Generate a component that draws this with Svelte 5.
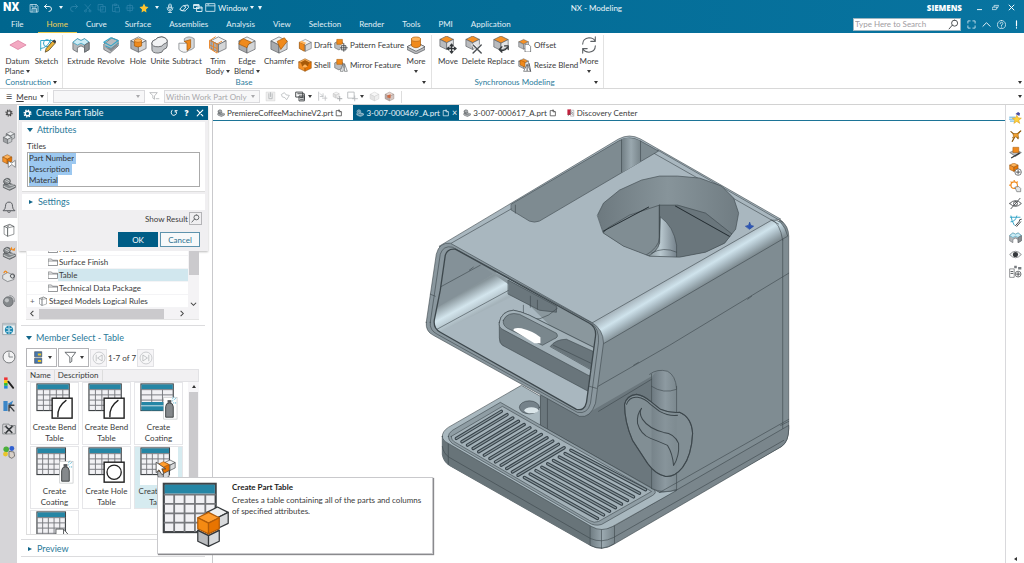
<script>
  import { onMount } from 'svelte';

  const G = ['#f2f3f4', '#a9abae', '#d3d5d7'];
  const O = ['#ffb45c', '#e87400', '#f59127'];

  // Isometric block: x/y is the top-left of its box, s its side
  function cube(x, y, s, top = G[0], left = G[1], right = G[2], line = '#55585c') {
    const m = x + s / 2, r = x + s, q = y + s / 4, h = y + s / 2, b = y + s * 0.76, e = y + s;
    return `<g stroke="${line}" stroke-width=".7" stroke-linejoin="round"><path d="M${m} ${y}L${r} ${q}L${m} ${h}L${x} ${q}Z" fill="${top}"/><path d="M${x} ${q}L${m} ${h}V${e}L${x} ${b}Z" fill="${left}"/><path d="M${r} ${q}L${m} ${h}V${e}L${r} ${b}Z" fill="${right}"/></g>`;
  }
  const oTop = (x, y, s) => cube(x, y, s, '#f59127', '#b9bbbe', '#e2e3e5');
  const oAll = (x, y, s) => cube(x, y, s, O[0], O[2], O[1], '#8a4a08');
  const line = (d, c = '#4d5155', w = 1.3) => `<path d="${d}" fill="none" stroke="${c}" stroke-width="${w}" stroke-linecap="round" stroke-linejoin="round"/>`;
  const fill = (d, c, s = 'none') => `<path d="${d}" fill="${c}" stroke="${s}" stroke-width=".8" stroke-linejoin="round"/>`;
  const cup = (c = '#85898c', l = '#45494c', w = '#e4e6e7') => `<path d="M2 11l6-3 11 4v3l-8 4-9-4z" fill="${c}" stroke="${l}"/><path d="M2 13l8 4 9-4M6 9l6 3 5-1" fill="none" stroke="${w}"/><path d="M3 4q4-4 8-1 2 3 0 6-3 3-7 1-3-3-1-6z" fill="${c}" stroke="${l}"/><path d="M4 5l6 3M6 3l5 3" stroke="${w}"/>`;

  const icons = {
    save: line('M3 3h12l3 3v12H3zM6 3v5h8V3M6 18v-7h9v7M8 14h5', '#cfe6f0', 1.5),
    undo: line('M7 3L3 7l4 4M3 7h9q5 0 5 5t-5 5', '#fff', 1.8),
    redo: line('M13 3l4 4-4 4M17 7H8q-5 0-5 5t5 5', '#2a82a8', 1.8),
    cut: line('M4 3l10 11M15 3L6 14M3 16a2 2 0 104 0 2 2 0 10-4 0M12 16a2 2 0 104 0 2 2 0 10-4 0', '#2a82a8', 1.6),
    copy: line('M3 3h9v11H3zM8 7h9v11H8z', '#2a82a8', 1.6),
    paste: line('M3 4h12v5M3 4v13h5M9 9h8v9H9zM7 2h4v3H7z', '#2a82a8', 1.6),
    target: line('M10 2v16M2 10h16M5 5h10v10H5z', '#2a82a8', 1.6),
    star: fill('M10 1l3 6 6 1-5 5 1 6-5-3-5 3 1-6-5-5 6-1z', '#ffc52e'),
    mic: line('M7 5q0-3 3-3t3 3v5q0 3-3 3t-3-3zM4 9q0 7 6 7t6-7M10 16v3M7 19h6M8 6h4M8 9h4', '#e6f3f8', 1.5),
    eraser: line('M2 12l6-7 6 3-6 7zM11 5l7-1 1 5-6 6M4 15l8 1', '#e6f3f8', 1.8),
    windows: line('M2 3h10v8H2zM2 5h10M8 8h10v9H8zM8 10h10', '#e6f3f8', 1.8),
    win: line('M2 3h16v14H2zM2 7h16M5 5h2', '#cfe6f0', 1.6),
    full: line('M2 7V2h5M13 2h5v5M18 13v5h-5M7 18H2v-5', '#e6f3f8', 1.7),
    up: line('M2 14l8-8 8 8', '#e6f3f8', 2.2),
    help: line('M10 1a9 9 0 100 18 9 9 0 100-18M7 8q0-3 3-3t3 3q0 2-3 3v2M10 15.500v.5', '#e6f3f8', 1.7),
    bang: line('M10 2v11M10 17v1', '#fff', 2.6),
    min: line('M4 16h12', '#fff', 2.6),
    restore: line('M6 8V4h13l-3 7h-3M3 9h12l-3 7H1z', '#e6f3f8', 2),
    close: line('M3 3l14 14M17 3L3 17', '#fff', 2.8),
    search: line('M12 2a5 5 0 100 11 5 5 0 100-11M8 11l-6 7', '#45494c', 1.7),

    datum: fill('M10 5l9 5-9 5-9-5z', '#f3a9c2', '#d87b9c'),
    sketch: line('M3 16V5h13M3 14q8-1 11-10M6 8a4 4 0 108 0 4 4 0 10-8 0', '#35a6c8', 1.1) + fill('M8 18l1-4 8-9 3 2-8 9z', '#e8b23a', '#4d3f20') + fill('M16 6l2-2 2.500 2-2 2z', '#3b3f44'),
    extrude: fill('M1 7l5-4 4 2 4-2 5 4v8l-5 3v-5l-4-2-4 2v5l-5-3z', '#b4b7ba', '#5c6064') + fill('M1 7l5-4 4 2 4-2 5 4-5 3-4-2-4 2z', '#cdebf4', '#35a6c8') + fill('M14 10l5-3v8l-5 3z', '#8d9194', '#5c6064'),
    revolve: fill('M2 9l9-7 7 3v6l-9 8-7-4z', '#b9bcbf', '#5c6064') + line('M2 7l8-5 8 3-8 6zM4 11l6 3 8-6', '#35a6c8', 1.2) + fill('M3 12l7 2 7-6v3l-7 6z', '#878b8f'),
    hole: cube(2, 1, 17) + fill('M6 5q4-3 8 0v6q-4 2.500-8 0z', '#f08a1c', '#a85a08') + '<ellipse cx="10" cy="5" rx="4" ry="2" fill="#ffb45c" stroke="#a85a08" stroke-width=".6"/>',
    unite: fill('M1 8q0-3 4-4 2-3 7-3 6 1 6 5v5q0 3-4 4-1 4-6 4-7 0-7-4z', '#c2c5c8', '#45494c') + fill('M1 8q0-3 4-4 2-3 7-3 6 1 6 5 0 2-4 3-1 3-6 3-7 0-7-4z', '#f2f3f4', '#45494c'),
    subtract: fill('M1 8v7q5 5 10 2v-9z', '#f4f5f6', '#777b7f') + fill('M7 3q5-4 11 0v10q-3 3-7 3V8L7 6z', '#d5d7d9', '#777b7f') + fill('M7 6l7-2v9l-4 3V8z', '#f08a1c', '#a85a08'),
    trim: cube(2, 1, 17) + line('M1 5l8 4v10L1 14zM9 9l5-3M1 5l6-4M5 7v9M1 10l8 4', '#e8862a', 1.1),
    edge: cube(1, 1, 18) + fill('M6 3l9 4q-4 1-5 6l-9-4q1-5 5-6z', '#f08a1c', '#a85a08'),
    chamfer: cube(1, 1, 18) + fill('M8 6l8-4 3 4-7 9z', '#f08a1c', '#a85a08'),
    draft: cube(2, 2, 17) + fill('M2 6l7 3v10l-7-4z', '#f08a1c', '#a85a08') + fill('M2 6l3-2 7 3-3 2z', '#ffb45c'),
    shell: oAll(1, 1, 18) + fill('M4 6l6-3 6 3-2 6-4 2-4-2z', '#a85a08') + fill('M6 12l4-3 4 3-4 2z', '#ffb45c'),
    pattern: fill('M1 7l6-3 6 3v7l-6 3-6-3z', '#b9bbbe', '#55585c') + fill('M4 2h8v7H4z', '#f08a1c', '#a85a08') + '<circle cx="14" cy="14" r="5.500" fill="#fff"/>' + line('M14 8v11M9 14h10M11 11h6v6h-6z', '#45494c', 1.3),
    mirror: fill('M1 7l6-3 6 3v7l-6 3-6-3z', '#b9bbbe', '#55585c') + fill('M4 2h8v7H4z', '#f08a1c', '#a85a08') + fill('M13 8l-4 11h4zM15 8l4 11h-4z', '#fff', '#45494c'),
    more: fill('M0 12l10-5 10 5v3l-10 5-10-5z', '#b9bbbe', '#55585c') + fill('M0 12l10-5 10 5-10 5z', '#eceeef', '#55585c') + fill('M5 3q5-3 10 0v8q-5 4-10 0z', '#f08a1c', '#a85a08') + '<ellipse cx="10" cy="3.500" rx="5" ry="2.500" fill="#ffb45c" stroke="#a85a08" stroke-width=".6"/>',
    move: oTop(1, 0, 15) + line('M14 9v10M9 14h10M12.500 11L14 9l1.500 2M12.500 17l1.500 2 1.500-2M11 12.500L9 14l2 1.500M17 12.500l2 1.500-2 1.500', '#34383b', 1.4),
    delete: oTop(1, 0, 15) + line('M9 10l9 9M18 10l-9 9', '#fff', 3.400) + line('M9 10l9 9M18 10l-9 9', '#4d5155', 1.6),
    replace: oTop(2, 0, 16) + line('M9 15q3 3 8-2M14 11h4v4M11 12l-3 3 3 3', '#34383b', 1.4),
    offset: oTop(1, 2, 14) + fill('M10 9h5l3 3v8h-8z', '#fff', '#34383b'),
    resize: oTop(1, 1, 14) + fill('M3 3l7 3v7l-7-3z', '#f08a1c', '#a85a08') + fill('M13 9l-5 10h10z', '#fff', '#34383b') + line('M13 10v8M16 8l2 11'),
    cycle: line('M3 9q0-6 7-7 5 0 7 4M17 1v5h-5M17 11q0 6-7 7-5 0-7-4M3 19v-5h5', '#5c6064', 1.200),

    funnel: line('M2 3h13l-5 6v6l-3-2V9zM13 14h5', '#a7aaad', 1.3),
    pin: fill('M2 2h16v16H2z', '#eee', '#ccc') + line('M7 5v9h6V5M10 3v7', '#b3b6b8', 1.6),
    brush: line('M3 6l5-3 3 4 6 1-5 8-3-4-4-1z', '#bcbfc1', 1.6),
    filterBox: line('M2 2h12v9H2zM5 5h12v10M8 9h9v9H8zM10 12h5M10 15h5', '#3f4346', 1.7),
    snap: line('M3 2v15M6 5l5 5M11 5v5H6M10 13h8M15 9v8', '#bfc1c3', 1.5),
    gcube: cube(2, 2, 11, '#f4f4f4', '#e0e0e0', '#eee', '#bbb') + line('M14 10v8M10 14h8', '#a7aaad', 1.8),
    gbox: line('M2 2h11v11H2zM14 9v9M10 14h9', '#b3b6b8', 1.5),
    fcube: cube(2, 2, 16, '#f7f7f7', '#e4e4e4', '#efefef', '#c5c5c5'),
    rcube: cube(2, 2, 16, '#e6d6d0', '#b9a8a4', '#d5c8c4', '#8c7d7a') + fill('M6 8l6-2v7l-6-1z', '#cf6a42'),

    gear: '<circle cx="10" cy="10" r="5" fill="none" stroke="currentColor" stroke-width="3"/><circle cx="10" cy="10" r="7.500" fill="none" stroke="currentColor" stroke-width="3" stroke-dasharray="3 2.890"/>',
    assembly: cube(6, 1, 12, '#eceeef', '#9ea1a4', '#c9ccce', '#4d5155') + cube(2, 6, 12, '#eceeef', '#9ea1a4', '#c9ccce', '#4d5155'),
    constraint: oAll(1, 1, 13) + fill('M9 10l5 3 5-4v10l-5-4-5 4z', '#fff', '#45494c'),
    cup: cup(),
    cupW: cup('#3f7f9c', '#dcebf2', '#e9f4f8'),
    bell: line('M2 15q3-2 3-6 0-6 5-6t5 6q0 4 3 6zM8 17q2 2 4 0', '#4d5155', 1.3),
    part: fill('M3 5l5 2v12l-5-3zM8 7l9-2v11l-9 3z', '#fff', '#45494c') + line('M3 5l8-3 6 3M10 4l-3 2', '#45494c', 1.1),
    cupO: cup() + fill('M11 5l3-4 1 4 4-3-1 5z', '#f08a1c'),
    sheet: fill('M1 9l7-4 9 4v6l-9 3-7-4z', '#e4e6e7', '#55585c') + line('M3 5q2-4 4 0', '#f08a1c', 2) + line('M12 10a3 3 0 106 0 3 3 0 10-6 0'),
    sphere: '<circle cx="9" cy="11" r="7" fill="#85898c" stroke="#5c6064"/><circle cx="7" cy="9" r="3" fill="#bfc2c4"/>' + line('M11 2q8 1 7 9M12 4q4 1 4 5', '#8b8f92', 1.2),
    web: fill('M1 2h18v16H1z', '#eaf2f5', '#7b7f83') + fill('M1 2h18v3H1z', '#b9c3c9') + '<circle cx="10" cy="11.500" r="6" fill="#1e86ae"/>' + line('M6 9q4 3 8 0M6 14q4-3 8 0M10 6v11', '#d0ebf5', 1.2),
    clock: '<circle cx="10" cy="10" r="8.500" fill="#f3f3f4" stroke="#6d7174" stroke-width="1.3"/>' + line('M10 4v6h5', '#6d7174', 1.2),
    rainbow: fill('M3 2h5v4H3z', '#e33') + fill('M3 6h5v4H3z', '#fc0') + fill('M3 10h5v4H3z', '#3b3') + fill('M3 14h5v4H3z', '#28d') + line('M9 8l7 9', '#222', 2.600),
    tools: fill('M2 3h6v14H2zM8 7l8-5-3 8z', '#3a86c8') + line('M10 9l7 8M10 17V9h7', '#3f4346', 2),
    cross: line('M1 5v12h18V5h-8l-1-2H2z', '#6d7174', 1) + line('M6 7l8 8M14 7l-8 8', '#34383b', 2.4) + line('M4 7l2-2M14 5l2 2M4 15l2 2', '#34383b', 1.4),
    balls: '<circle cx="6" cy="6" r="4" fill="#4caf3a"/><circle cx="14" cy="5" r="3.500" fill="#2f5fd0"/><circle cx="5" cy="13" r="3.500" fill="#e9c52a"/>' + fill('M10 9l7 1 1 6-4 3-4-2z', '#d8d0c8', '#333'),

    rStar: line('M1 8h8M0 11h8M2 14h6', '#4aa3d8', 1.4) + fill('M12 5l2 4 5 .5-4 3 1.500 5-4.500-3-4.500 3 1.500-5-4-3 5-.5z', '#ffd23c', '#d99b12') + fill('M10 3l4-3 3 2-1 4z', '#4b4fa0'),
    rAxis: line('M3 4l6 5M18 3l-7 6M9 12l-4 7M12 12l2 3', '#8a5508', 1.8) + fill('M6 7l7 0 4-3-3 5 1 5-5-2-5 2 2-3z', '#f0a030', '#8a5508'),
    rTool: fill('M1 10l9-4 9 4-9 6z', '#b9bbbe', '#45494c') + fill('M6 2h9v8H6z', '#f08a1c', '#a85a08') + line('M4 18l12-7', '#34383b', 2),
    rAdd: oAll(1, 0, 13) + '<circle cx="14" cy="14" r="5" fill="#fff" stroke="#34383b"/>' + line('M14 11v6M11 14h6', '#34383b', 1.2),
    rGear: line('M8 3a5 5 0 100 10 5 5 0 100-10M8 0v2M1 8h1M3 3l1 1M13 3l-1 1', '#f08a1c', 1.8) + fill('M9 11l6-1 3 3v5h-6z', '#e4e6e7', '#45494c'),
    rHide: line('M1 10q9-9 18 0-9 9-18 0M10 7a3 3 0 100 6 3 3 0 100-6M3 18L17 2', '#3f4346', 1.3),
    rPen: line('M2 5h15M3 3q1 8 5 14M3 12q7 0 9-9', '#35a6c8', 1.5) + line('M10 18l6-7q-1-3 3-3M12 19l6-7', '#45494c', 1.500),
    rEye: fill('M1 10q9-10 18 0-9 10-18 0', '#f4f5f5', '#34383b') + '<circle cx="10" cy="10" r="4" fill="#34383b"/>',
    rTree: fill('M1 6h7v13H1z', '#fff', '#34383b') + fill('M8 1h4v4H8zM14 3h5v4h-5z', '#777b7f') + '<circle cx="14" cy="14" r="4.500" fill="#fff" stroke="#34383b"/>' + line('M14 11v6M11 14h6M3 10h3M3 13h3', '#34383b', 1.2),
    folder: line('M1 4h6l2 2.500h10V17H1zM1 8h18', '#5c6064', 1.3),
    swap: line('M5 3Q1 8 4 13t9 2q5-3 3-8l-3-3M13 8V4h5', '#fff', 2.2),
    page: line('M4 4h8l4 4v9H4zM10 2v5h6', 'currentColor', 1.8),
    redpage: fill('M1 1h9v14H1z', '#c2203c') + fill('M9 3h8v15H9z', '#f4f4f5', '#55585c') + line('M11 7l4 3M11 11l4 3M3 17l6-8', '#55585c', 1.4),
    stack: fill('M4 1h11v8H4zM4 11h11v8H4z', '#4677b0', '#34383b') + fill('M9 4h5v3H9zM9 14h5v3H9z', '#e9c52a'),
    funnelD: line('M2 2h16l-6 8v6l-3 2V10z', '#5c6064', 1.4),
    first: '<circle cx="10" cy="10" r="8.500" fill="#f8f8f9" stroke="#b9bbbe"/>' + line('M6 6v8M14 6l-6 4 6 4z', '#b9bbbe', 1.2),
    last: '<circle cx="10" cy="10" r="8.500" fill="#f8f8f9" stroke="#b9bbbe"/>' + line('M14 6v8M6 6l6 4-6 4z', '#b9bbbe', 1.2)
  };

  // 40-unit pictures for the reuse library
  function table(cx = 5, w = 34, h = 28) {
    let s = `<rect x="1" y="1" width="${w}" height="${h}" fill="#f1f1f4" stroke="#3f4346" stroke-width="1.2"/><rect x="1.500" y="1.500" width="${w - 1}" height="5" fill="#2586a5"/>`;
    for (let i = 1; i < cx; i++) s += `<path d="M${1 + (i * w) / cx} 7V${h + 1}" stroke="#77797d" stroke-width="1"/>`;
    for (let i = 0; i < 4; i++) s += `<path d="M1 ${7 + i * (h - 6) / 4}H${w + 1}" stroke="#77797d" stroke-width="1"/>`;
    return s;
  }
  const can = `<rect x="25" y="15" width="14" height="23" fill="#fff" stroke="#b5b8ba" stroke-width=".6"/><path d="M27 25q0-4 4-4t4 4v11h-8z" fill="#85898c" stroke="#3f4346"/><path d="M29 18h4v3h-4z" fill="#55585c"/><path d="M34 19l4-3M35 21h3M34 17l2-3" stroke="#35a6c8" stroke-dasharray="1 1"/>`;
  const blocks = cube(25, 17, 12, '#eef0f1', '#b9bbbe', '#d8dadc', '#34383b') + cube(17, 26, 13, '#eef0f1', '#b9bbbe', '#d8dadc', '#34383b') + cube(17, 19, 13, '#ff9d2e', '#f58a12', '#e87400', '#b35c08');
  const pictures = {
    bend: table() + '<rect x="17" y="16" width="21" height="21" fill="#fff" stroke="#222" stroke-width="1.500"/><path d="M23 36q-1-11 9-18" fill="none" stroke="#222" stroke-width="1.400"/>',
    coat: table(3, 34, 28) + '<rect x="1.500" y="20" width="33" height="9" fill="#2586a5"/><path d="M1 24H35" stroke="#d5e6ec"/>' + can,
    coat2: table(5, 30) + can,
    hole: table() + '<rect x="17" y="16" width="21" height="21" fill="#fff" stroke="#222" stroke-width="1.500"/><circle cx="27.500" cy="26.500" r="7.500" fill="none" stroke="#222" stroke-width="1.400"/>',
    part: table(5, 30) + `<g transform="translate(3 -2) scale(.92)">${blocks}</g>` + '<path d="M17 16v11l3-3 3 5 2-1-2-5h4z" fill="#fff" stroke="#333" stroke-width=".8"/>',
    sheet: table(5, 30) + '<path d="M21 19h8l6 7v12H21z" fill="#fff" stroke="#55585c"/><path d="M29 19v7h6" fill="none" stroke="#55585c"/>',
    big: table(5, 29, 27) + `<g transform="translate(2 -2)">${cube(23, 16, 12, '#eef0f1', '#b9bbbe', '#d8dadc', '#34383b')}${cube(18, 26, 12, '#eef0f1', '#b9bbbe', '#d8dadc', '#34383b')}${cube(18, 19, 12, '#ff9d2e', '#f58a12', '#e87400', '#b35c08')}</g>`
  };

  const quick = ['save', 'undo', '', 'redo', 'cut', 'copy', 'paste', 'target', 'star', '', 'mic', 'eraser', 'windows'];
  const tabs = ['File', 'Home', 'Curve', 'Surface', 'Assemblies', 'Analysis', 'View', 'Selection', 'Render', 'Tools', 'PMI', 'Application'];
  const groups = [
    { name: 'Construction', cls: 'construction', items: [['datum', 'Datum', 'Plane'], ['sketch', 'Sketch']] },
    { name: 'Base', cls: 'base', items: [['extrude', 'Extrude'], ['revolve', 'Revolve'], ['hole', 'Hole'], ['unite', 'Unite'], ['subtract', 'Subtract'], ['trim', 'Trim', 'Body'], ['edge', 'Edge', 'Blend'], ['chamfer', 'Chamfer'], [['draft', 'Draft'], ['shell', 'Shell']], [['pattern', 'Pattern Feature'], ['mirror', 'Mirror Feature']], ['more', 'More', ' ']] },
    { name: 'Synchronous Modeling', cls: 'sync', items: [['move', 'Move'], ['delete', 'Delete'], ['replace', 'Replace'], [['offset', 'Offset'], ['resize', 'Resize Blend']], ['cycle', 'More', ' ']] }
  ];
  const rail = [['gear', 'Settings', 'first'], ['assembly', 'Assembly Navigator'], ['constraint', 'Constraint Navigator'], ['cup', 'Part Navigator'], ['bell', 'Notifications'], ['part', 'Reuse Library', 'on'], ['cupO', 'View Manager'], ['sheet', 'Process'], ['sphere', 'Materials', 'tall'], ['web', 'Web Browser', 'tall'], ['clock', 'History', 'tall'], ['rainbow', 'Visual Reporting'], ['tools', 'Tools'], ['cross', 'Utilities'], ['balls', 'Roles']];
  const right = ['rStar', 'rAxis', 'rTool', 'rAdd', 'rGear', 'rHide', 'rPen', 'extrude', 'rEye', 'rTree'];
  const docs = [['cup', 'PremiereCoffeeMachineV2.prt'], ['cupW', '3-007-000469_A.prt'], ['cup', '3-007-000617_A.prt'], ['redpage', 'Discovery Center']];
  const members = [['bend', 'Create Bend Table'], ['bend', 'Create Bend Table'], ['coat', 'Create Coating'], ['coat2', 'Create Coating'], ['hole', 'Create Hole Table'], ['part', 'Create Part Table'], ['sheet', '']];

  const slotsA = Array.from({ length: 12 }, (_, i) => [457 + i * 5.6, 438 + i * 3.35, 502 + i * 5.7, 411 + i * 3.3]);
  const slotsB = Array.from({ length: 9 }, (_, i) => [525 + i * 5.8, 477 - i * 3.4, 598 + i * 6, 518 - i * 3.6]);

  let titles = $state('Part Number\nDescription\nMaterial');
  let scope = $state('Within Work Part Only');
  let titleBox;
  onMount(() => {
    titleBox.focus();
    titleBox.select();
  });
</script>

{#snippet icon(name)}
  <svg class="icon" viewBox="0 0 20 20" aria-hidden="true">{@html icons[name]}</svg>
{/snippet}

{#snippet tool(item)}
  <button class="tool">
    {@render icon(item[0])}
    <span>{item[1]}</span>
    {#if item[2]}<span class="second">{item[2]}<i class="caret"></i></span>{/if}
  </button>
{/snippet}

<div class="app">
  <header>
    <div class="titlebar">
      <div class="quick">
        <b class="nx">NX</b>
        {#each quick as q}
          {#if q}<button class="q" aria-label={q}>{@render icon(q)}</button>{:else}<i class="caret"></i>{/if}
        {/each}
        <button class="window">{@render icon('win')}Window <i class="caret"></i></button>
        <i class="caret over"></i>
      </div>
      <span class="apptitle">NX - Modeling</span>
      <div class="brand">
        <b>SIEMENS</b>
        <button aria-label="Minimize">{@render icon('min')}</button>
        <button aria-label="Restore">{@render icon('restore')}</button>
        <button aria-label="Close">{@render icon('close')}</button>
      </div>
    </div>
    <nav>
      {#each tabs as t}<button class:home={t === 'Home'} class:file={t === 'File'}>{t}</button>{/each}
      <div class="find">
        <label><input type="search" placeholder="Type Here to Search" aria-label="Search" />{@render icon('search')}</label>
        <button aria-label="Full screen">{@render icon('full')}</button>
        <button aria-label="Collapse ribbon">{@render icon('up')}</button>
        <button aria-label="Help">{@render icon('help')}</button>
        <button aria-label="Alerts">{@render icon('bang')}</button>
      </div>
    </nav>
  </header>

  <section class="ribbon">
    {#each groups as g}
      <div class="group">
        <div class="tools {g.cls}">
          {#each g.items as it}
            {#if Array.isArray(it[0])}
              <div class="pair">
                {#each it as s}<button class="small">{@render icon(s[0])}{s[1]}</button>{/each}
              </div>
            {:else}{@render tool(it)}{/if}
          {/each}
        </div>
        <div class="gname"><span>{g.name}</span><i class="caret"></i></div>
      </div>
    {/each}
    <i class="caret endcaret"></i>
  </section>

  <section class="selbar">
    <button class="menu"><span class="burger">☰</span><u>M</u>enu <i class="caret"></i></button>
    <div class="drop first"><select aria-label="Type filter"><option></option></select></div>
    <span class="cell">{@render icon('funnel')}</span>
    <div class="drop scope"><select aria-label="Selection scope" bind:value={scope}><option>Within Work Part Only</option></select></div>
    <div class="selicons">
      {#each ['pin', 'brush', 'filterBox', '', 'snap', 'gcube', 'gbox', '', 'fcube', 'rcube'] as s}
        {#if s}<button aria-label={s}>{@render icon(s)}</button>{:else}<i class="caret"></i>{/if}
      {/each}
    </div>
    <i class="caret endcaret"></i>
  </section>

  <main>
    <aside class="rail">
      {#each rail as [n, label, cls]}<button class={cls} aria-label={label}>{@render icon(n)}</button>{/each}
    </aside>

    <div class="panel">
      <form class="dialog" onsubmit={(e) => e.preventDefault()}>
        <div class="dhead">{@render icon('gear')}<span>Create Part Table</span>
          <button type="button" aria-label="Reset">{@render icon('swap')}</button>
          <button type="button" aria-label="Help"><b>?</b></button>
          <button type="button" aria-label="Close">{@render icon('close')}</button>
        </div>
        <div class="dsec attributes">
          <h2><i class="tri open"></i>Attributes</h2>
          <label for="titles">Titles</label>
          <textarea id="titles" rows="3" spellcheck="false" bind:value={titles} bind:this={titleBox}></textarea>
        </div>
        <div class="dsec settings"><h2><i class="tri"></i>Settings</h2></div>
        <div class="result"><label for="show">Show Result</label><button id="show" type="button" aria-label="Show Result">{@render icon('search')}</button></div>
        <div class="actions"><button class="ok">OK</button><button type="button" class="cancel">Cancel</button></div>
      </form>

      <div class="tree">
        <ul>
          <li>{@render icon('folder')}<span>Note</span></li>
          <li>{@render icon('folder')}<span>Surface Finish</span></li>
          <li class="picked">{@render icon('folder')}<span>Table</span></li>
          <li>{@render icon('folder')}<span>Technical Data Package</span></li>
          <li class="root"><em>+</em>{@render icon('part')}<span>Staged Models Logical Rules</span></li>
        </ul>
        <div class="vbar"><i class="thumb"></i><svg viewBox="0 0 8 8"><path d="M1 2l3 3 3-3" /></svg></div>
        <div class="hbar"><svg viewBox="0 0 8 8"><path d="M5 1L2 4l3 3" /></svg><i class="thumb"></i><svg viewBox="0 0 8 8"><path d="M3 1l3 3-3 3" /></svg></div>
      </div>

      <section class="members">
        <h2><i class="tri open"></i>Member Select - Table</h2>
        <div class="mtools">
          <button class="wide" aria-label="View style">{@render icon('stack')}<i class="caret"></i></button>
          <button class="wide" aria-label="Filter">{@render icon('funnelD')}<i class="caret"></i></button>
          <button class="pg" aria-label="First page">{@render icon('first')}</button>
          <span>1-7 of 7</span>
          <button class="pg" aria-label="Last page">{@render icon('last')}</button>
        </div>
        <div class="mhead"><span>Name</span><span>Description</span></div>
        <div class="mbody">
          <div class="mgrid">
            {#each members as [p, label]}
              <button class:hot={p === 'part'}>
                <svg viewBox="0 0 40 40" aria-hidden="true">{@html pictures[p]}</svg>
                <span>{label}</span>
              </button>
            {/each}
          </div>
          <div class="mscroll"><i class="caret upc"></i><i class="thumb"></i></div>
        </div>
        <div class="tip" role="tooltip">
          <svg viewBox="0 0 38 38" aria-hidden="true">{@html pictures.big}</svg>
          <div><b>Create Part Table</b><p>Creates a table containing all of the parts and columns of specified attributes.</p></div>
        </div>
      </section>
      <section class="preview"><h2><i class="tri"></i>Preview</h2></section>
    </div>

    <div class="work">
      <div class="docs">
        {#each docs as [n, label], i}
          <button class:active={i === 1}>{@render icon(n)}<span>{label}</span>{#if i < 3}{@render icon('page')}{/if}{#if i === 1}<span class="x">×</span>{/if}</button>
        {/each}
      </div>
      <svg class="model" viewBox="214 121 791 442" role="img" aria-label="Coffee machine model">
        <defs>
          <linearGradient id="band" gradientUnits="userSpaceOnUse" x1="680" y1="272" x2="692" y2="292">
            <stop offset="0" stop-color="#a9b7bf" /><stop offset=".38" stop-color="#cfe3ec" /><stop offset=".6" stop-color="#b3c5ce" /><stop offset="1" stop-color="#808d93" />
          </linearGradient>
          <linearGradient id="inner" gradientUnits="userSpaceOnUse" x1="468" y1="290" x2="480" y2="312">
            <stop offset="0" stop-color="#87949a" /><stop offset=".5" stop-color="#d3e5ed" /><stop offset="1" stop-color="#a5b3ba" />
          </linearGradient>
          <linearGradient id="post"><stop offset="0" stop-color="#6d7980" /><stop offset=".55" stop-color="#8d9aa1" /><stop offset="1" stop-color="#7b888e" /></linearGradient>
          <linearGradient id="well"><stop offset="0" stop-color="#6c787e" /><stop offset=".5" stop-color="#87949a" /><stop offset="1" stop-color="#6f7b81" /></linearGradient>
          <linearGradient id="fin"><stop offset="0" stop-color="#7c898f" /><stop offset=".5" stop-color="#b9c8cf" /><stop offset="1" stop-color="#74818a" /></linearGradient>
          <linearGradient id="corner"><stop offset="0" stop-color="#717e84" /><stop offset=".5" stop-color="#9aa8af" /><stop offset="1" stop-color="#78858b" /></linearGradient>
          <clipPath id="hole"><path d="M598 215L604 203 620 190 642 180 660 176H678L700 178 722 186 734 198 739 213 736 229 725 243 706 252 680 257 650 256 624 246 604 233Z" /></clipPath>
          <clipPath id="mouth"><path d="M441 290L446 255Q448 248 456 249L590 323Q597 327 596 336L587 402Q585 411 577 409L441 332Q434 328 435 320Z" /></clipPath>
        </defs>
        <g stroke="#3d474c" stroke-width=".6" stroke-linejoin="round" stroke-linecap="round" fill="none">
          <!-- housing side and column -->
          <path d="M598 326L781 220Q789 226 789 236V428Q789 441 782 446L660 515 541 440V395L585 417Z" fill="#7f8c92" />
          <path d="M541 392L583 416 652 376V489L541 425Z" fill="#6b777d" stroke="none" />
          <path d="M541 396V425M548 398V428" />
          <!-- base -->
          <path d="M443 436V454Q444 461 450 465L591 545Q602 551 614 544L782 446Q789 441 789 428L789 425 612 527Q602 531 594 526Z" fill="#7a868c" />
          <path d="M443 436V454Q444 461 450 465L591 545V524L449 442Z" fill="#687479" stroke="none" />
          <path d="M591 525Q602 532 615 525V543Q603 551 591 545Z" fill="url(#corner)" />
          <path d="M443 446Q444 453 450 457L591 538Q602 543 614 537L784 440M449 443V464M602 528V548" />
          <path d="M443 436Q443 431 449 427L522 385 541 396V425L660 492 677 490 613 526Q602 532 592 526L449 443Q443 440 443 436Z" fill="#a9b8bf" />
          <path d="M449 436Q449 433 453 430L501 402 654 489Q658 492 653 495L602 524Q595 526 589 522L453 443Q449 440 449 436Z" fill="#8f9da4" />
          <path d="M452 436L503 406 652 491 599 521Q595 523 590 520L456 442Q452 440 452 436Z" fill="#a3b1b8" />
          <ellipse cx="530" cy="407" rx="10" ry="6.500" fill="#75828a" />
          <ellipse cx="532" cy="410" rx="7" ry="3" fill="#dbe6ea" stroke="none" />
          <g stroke="#38434a" stroke-width="3.4">
            {#each slotsA as [a, b, c, d]}<path d="M{a} {b}L{c} {d}" />{/each}
            {#each slotsB as [a, b, c, d]}<path d="M{a} {b}L{c} {d}" />{/each}
          </g>
          <g stroke="#8b999f" stroke-width="1.2">
            {#each slotsA as [a, b, c, d]}<path d="M{a} {b}L{c} {d}" />{/each}
            {#each slotsB as [a, b, c, d]}<path d="M{a} {b}L{c} {d}" />{/each}
          </g>
          <!-- column and handle -->
          <path d="M652 380Q653 370 664 370 676 372 677 386V489Q664 494 652 488Z" fill="url(#post)" stroke="none" />
          <path d="M652 374V488M677 386V489M650 374Q658 368 668 371 676 375 677 388M652 386Q664 394 677 389M652 488Q664 494 677 489" />
          <path d="M599 411L652 379" />
          <path d="M625 404Q627 395 637 394 644 395 651 401L661 409Q670 413 680 412 692 417 693 433 692 455 683 467 675 477 666 476 656 474 648 463L633 440Q625 422 625 404Z" fill="#818e94" />
          <path d="M652 402L677 413V471Q663 480 652 467Z" fill="url(#post)" stroke="none" opacity=".5" />
          <path d="M625 404Q627 395 637 394 644 395 651 401L661 409Q670 413 680 412 692 417 693 433 692 455 683 467 675 477 666 476 656 474 648 463L633 440Q625 422 625 404Z" stroke-width="1.100" />
          <path d="M627 404Q630 396 638 397 645 398 651 404L660 411Q669 416 678 415M642 408Q639 413 643 419 649 428 664 432 675 433 679 443 680 456 674 465 673 453 668 445 659 441 651 438 641 434 638 423 637 414 642 408Z" stroke-width="1" />
          <path d="M660 492L789 419M781 425L789 421M783 231V428" />
          <path d="M595 388L670 345 789 273M634 365L639 362M748 299L752 296" />
          <!-- top shell -->
          <path d="M440 246L619 139Q630 133 641 139L781 219 772 221 596 324Z" fill="#a9b7bf" />
          <path d="M592 323L772 220Q783 218 788 236L603 344Q602 332 592 323Z" fill="url(#band)" />
          <path d="M452 243L515 207M654 153L779 224M658 150L783 222M772 220Q780 222 783 240" />
          <path d="M512 204L619 141Q630 135 641 141L659 151 540 221Q535 223 530 221L512 210Z" fill="#7e8b91" />
          <path d="M622 139Q630 136 641 141V162L622 173Z" fill="url(#corner)" stroke="none" />
          <path d="M622 140V172M641 141V161M516 205V213" />
          <g clip-path="url(#hole)">
            <path d="M595 170H742V262H595Z" fill="url(#well)" stroke="none" />
            <path d="M600 237L608 228 630 215 660 205V262H600Z" fill="#808d93" />
            <path d="M660 205H678L706 213 735 236V262H660Z" fill="#6a767c" />
            <path d="M602 232L649 207M676 206L733 238" stroke="#222b30" stroke-width="1" />
            <path d="M661 217Q674 226 677 245V258H645Q658 252 660 243Z" fill="url(#fin)" />
            <path d="M660 205V237Q660 247 645 256M652 253Q664 246 677 252" />
          </g>
          <path d="M598 215L604 203 620 190 642 180 660 176H678L700 178 722 186 734 198 739 213 736 229 725 243 706 252 680 257 650 256 624 246 604 233Z" />
          <path d="M746 226l3-1 1-3 1 3 3 1-4 3z" fill="#2d56b5" stroke="#2448a0" />
          <!-- mouth -->
          <path d="M427 322L437 254Q440 242 451 243L592 322Q604 329 604 343L596 403Q591 418 580 416L434 335Q426 331 427 322Z" fill="#8a979e" />
          <g clip-path="url(#mouth)">
            <path d="M430 240H610V420H430Z" fill="#a9b7bf" stroke="none" />
            <path d="M440 240L500 270 432 314Z" fill="#849198" stroke="none" />
            <path d="M432 311L495 273 530 288 434 335Z" fill="url(#inner)" stroke="none" />
            <path d="M437 289L481 265M434 331L515 287M470 270L474 267" />
            <path d="M480 264L600 328V362L555 330 509 284Z" fill="#8a979d" stroke="none" />
            <path d="M509 280L557 306V312L540 310 509 294Z" fill="#6b777d" />
            <path d="M531 296V307M538 300V309M524 305V316Q540 325 558 308" />
            <path d="M500 322Q502 311 514 310 521 311 530 315L600 350V397L503 345Q500 343 500 338Z" fill="#69757b" />
            <path d="M500 322Q502 311 514 310 521 311 530 315L600 350V381L503 329Q499 327 500 322Z" fill="#a3b1b8" />
            <path d="M504 320Q508 311 520 314L557 333Q560 337 554 339L543 345 508 328Q503 325 504 320Z" fill="#7a878d" />
            <path d="M514 330Q514 327 522 328 534 331 541 337V343L535 343Z" fill="#fff" stroke="none" />
            <path d="M551 346Q556 339 567 339L600 354V374Z" fill="#69757b" />
            <path d="M554 345L600 367M600 373L590 375" />
          </g>
          <path d="M441 290L446 255Q448 248 456 249L590 323Q597 327 596 336L587 402Q585 411 577 409L441 332Q434 328 435 320Z" stroke-width="1.300" />
          <path d="M431 322L441 254Q444 245 453 247L591 322Q600 328 599 342L591 403Q588 414 578 412L438 334Q430 330 431 322ZM431 294l5 2M590 386L597 388" />
        </g>
      </svg>
    </div>

    <aside class="tray">
      {#each right as n}<button aria-label={n}>{@render icon(n)}</button>{/each}
      <i class="caret left"></i>
    </aside>
  </main>
</div>

<style>
  :global(body) { background: #fff; }
  :where(button, input, select, textarea) { font: inherit; color: inherit; border: 0; padding: 0; margin: 0; background: none; box-sizing: border-box; }
  :where(h2, p, ul) { margin: 0; padding: 0; font-weight: 400; }
  .app { min-height: 100vh; display: flex; flex-direction: column; overflow: hidden; background: #fff; color: #3b3b3b; font: 8px/10px Lato, "Open Sans", sans-serif; }
  button { display: flex; align-items: center; white-space: nowrap; }
  .icon { width: 11px; height: 11px; flex: none; display: block; }
  .caret { width: 0; height: 0; flex: none; border: 2px solid transparent; border-top: 3px solid currentColor; border-bottom: 0; display: inline-block; }

  header { background: linear-gradient(90deg, #00668e, #0874a0); color: #eef7fb; height: 33px; }
  .titlebar { display: flex; justify-content: space-between; align-items: center; height: 15px; padding: 0 4px 0 3px; }
  .quick, .brand, .find { display: flex; align-items: center; }
  .nx { font: 900 12px/15px Roboto, sans-serif; color: #fff; width: 24px; }
  .q { width: 14px; justify-content: center; }
  .quick .q .icon { width: 10px; height: 10px; }
  .quick > .caret { margin: 0 4px; }
  .window { gap: 2px; }
  .over { border-top-width: 4px; }
  .brand b { font: 800 8px/10px "Open Sans", sans-serif; color: #fff; margin-right: 10px; }
  .brand button { width: 16px; justify-content: center; }
  .brand .icon { width: 7px; height: 7px; }
  nav { display: flex; height: 18px; align-items: stretch; padding-left: 2px; color: #e0eff6; }
  nav > button { padding: 0 9px; border-bottom: 1px solid transparent; }
  nav > .file { margin-right: 5px; }
  nav > .home { color: #f0cf56; border-bottom: 1px solid #e9c94c; }
  .find { margin-left: auto; }
  .find label { display: flex; align-items: center; background: #fff; border: 1px solid #9db5c0; width: 108px; height: 13px; box-sizing: border-box; padding: 0 1px; margin-right: 3px; }
  .find input { flex: 1; min-width: 0; outline: 0; color: #333; appearance: none; }
  .find input::placeholder { color: #a19ca2; opacity: 1; }
  .find > button { width: 15px; justify-content: center; }
  .find > button .icon { width: 9px; height: 9px; }

  .ribbon { display: flex; height: 55px; border-bottom: 1px solid #d8d8d8; }
  .group { display: flex; flex-direction: column; padding: 1px 1px 1px 3px; border-right: 1px solid #e2e2e2; margin-top: 2px; }
  .tools { display: grid; flex: 1; align-items: start; }
  .construction { grid-template-columns: 29px 29px; }
  .base { grid-template-columns: 30px 30px 24px 20px 34px 28px 30px 34px 36px 70px 28px; }
  .sync { grid-template-columns: 26px 25px 30px 60px 26px; }
  .tool { flex-direction: column; }
  .tool .icon { width: 18px; height: 18px; margin-bottom: 2px; }
  .second { display: flex; align-items: center; gap: 2px; min-height: 10px; white-space: pre; }
  .pair { display: grid; gap: 6px; padding: 2px 0 0 2px; }
  .small { gap: 2px; height: 14px; }
  .small .icon { width: 14px; height: 14px; }
  .gname { display: flex; align-items: center; color: #2b7b9b; line-height: 10px; padding-right: 4px; }
  .gname span { flex: 1; text-align: center; }
  .gname .caret, .endcaret { color: #333; }
  .ribbon .endcaret { margin: 48px 2px 0 auto; }

  .selbar { display: flex; align-items: center; height: 15px; border-bottom: 1px solid #d2d2d2; }
  .menu { padding-left: 6px; width: 48px; border-right: 1px solid #ddd; margin-right: 5px; }
  .burger { font: 7px/10px "DejaVu Sans", sans-serif; margin-right: 4px; }
  .menu .caret { margin-left: 3px; }
  .drop { position: relative; border: 1px solid #dadadd; background: #f7f7f8; height: 11px; color: #a8a8ab; }
  .drop::after { content: ""; position: absolute; right: 4px; top: 4px; border: 2px solid transparent; border-top: 3px solid #a9a9ac; border-bottom: 0; }
  .drop select { appearance: none; width: 100%; height: 11px; line-height: 10px; outline: 0; display: block; padding-left: 1px; }
  .drop.first { width: 90px; }
  .drop.scope { width: 94px; }
  .cell { width: 19px; display: grid; place-items: center; }
  .selicons { display: flex; align-items: center; border-right: 1px solid #ddd; padding: 0 4px 0 3px; }
  .selicons button { width: 15px; height: 12px; justify-content: center; }
  .selicons .caret { margin-right: 3px; }
  .selbar .endcaret { margin: 0 2px 0 auto; }

  main { flex: 1; display: grid; grid-template-columns: 17px 196px 1fr 19px; }
  .rail { background: #d6d5d8; padding-top: 1px; }
  .rail button { width: 17px; height: 23px; justify-content: center; color: #444; }
  .rail .icon { width: 14px; height: 14px; }
  .rail .first { height: 13px; margin-bottom: 7px; }
  .rail .first .icon { width: 8px; height: 8px; }
  .rail .tall { height: 28px; }
  .rail .on { background: #fff; }

  .panel { border-right: 1px solid #c9c9cc; display: flex; flex-direction: column; }
  .dialog { background: #f0eff1; width: 189px; margin: 1px 0 0 2px; padding-bottom: 4px; box-shadow: 0 1px 2px #bbb; }
  .dhead { display: flex; align-items: center; background: #005d86; color: #eef7fb; height: 14px; padding: 0 4px; gap: 4px; font-size: 9px; }
  .dhead > .icon { width: 9px; height: 9px; color: #fff; }
  .dhead span { flex: 1; }
  .dhead button { width: 9px; justify-content: center; }
  .dhead button .icon { width: 8px; height: 8px; }
  .dhead b { font: 800 8px/10px "Open Sans", sans-serif; color: #fff; }
  h2 { display: flex; align-items: center; color: #2a7999; font-size: 9px; line-height: 14px; }
  .tri { width: 0; height: 0; border: 2px solid transparent; border-left: 4px solid #12668a; border-right: 0; margin-right: 5px; margin-left: 2px; }
  .tri.open { border: 3px solid transparent; border-top: 4px solid #12668a; border-bottom: 0; margin: 0 4px 0 0; }
  .dsec { background: #fff; margin: 0 3px; padding: 1px 5px; }
  .attributes { border-bottom: 1px solid #ddd; padding-bottom: 4px; margin-top: 2px; }
  .attributes label { display: block; margin: 4px 0 1px; }
  textarea { display: block; width: 173px; height: 35px; line-height: 11px; resize: none; outline: 0; border: 1px solid #aaa; padding: 0 1px; background: #fff; overflow: hidden; }
  textarea::selection { background: #9cc8f0; color: #333; }
  .settings { margin-top: 2px; }
  .result, .actions { display: flex; justify-content: flex-end; align-items: center; padding-right: 8px; }
  .result { gap: 1px; margin-top: 2px; padding-right: 6px; }
  .result button { width: 13px; height: 13px; border: 1px solid #b4b4b7; justify-content: center; }
  .result .icon { width: 9px; height: 9px; }
  .actions { gap: 2px; margin-top: 7px; }
  .actions button { width: 40px; height: 15px; justify-content: center; }
  .actions .ok { background: #005d86; color: #fff; }
  .actions .cancel { border: 1px solid #5e93ad; color: #2a7090; background: #f7f9fa; }

  .tree { margin: 0 13px 0 9px; height: 68px; display: grid; grid-template: 1fr 11px / 1fr 11px; border-bottom: 1px solid #e5e5e5; background: #fff; }
  .tree ul { list-style: none; overflow: hidden; display: flex; flex-direction: column; justify-content: flex-end; border-left: 1px solid #eee; }
  .tree li { height: 13px; flex: none; display: flex; align-items: center; padding-left: 21px; border-bottom: 1px solid #f4f4f6; box-sizing: border-box; }
  .tree li .icon { width: 10px; height: 10px; }
  .tree li span { flex: 1; line-height: 12px; padding-left: 1px; }
  .tree .picked span { background: #d1e7ee; }
  .tree .root { padding-left: 3px; }
  .tree em { font-style: normal; width: 8px; color: #666; }
  .thumb { background: #cbcacd; display: block; }
  .vbar { background: #f4f3f5; display: flex; flex-direction: column; justify-content: space-between; align-items: center; }
  .vbar .thumb { width: 10px; height: 24px; }
  .tree svg:not(.icon) { width: 7px; height: 7px; fill: none; stroke: #444; stroke-width: 1.2; }
  .hbar { grid-column: 1 / -1; background: #f4f3f5; display: flex; align-items: center; padding: 0 14px 0 3px; gap: 3px; }
  .hbar .thumb { width: 125px; height: 10px; margin-right: auto; }

  .members { position: relative; border-top: 1px solid #dcdcde; margin: 5px 7px 0 4px; padding: 5px 6px 4px 5px; border-bottom: 1px solid #dcdcde; }
  .mtools { display: flex; align-items: center; margin-top: 3px; }
  .mtools .wide { width: 31px; height: 19px; border: 1px solid #b4b4b7; justify-content: space-between; padding: 0 4px 0 5px; margin-right: 1px; }
  .wide .icon { width: 13px; height: 13px; }
  .mtools .pg { width: 17px; height: 18px; border: 1px solid #e2e2e5; background: #f6f5f7; justify-content: center; }
  .pg .icon { width: 14px; height: 14px; }
  .mtools span { padding: 0 1px; }
  .mhead { display: flex; background: #f1f0f2; border: 1px solid #e2e2e5; margin-top: 2px; height: 11px; line-height: 11px; }
  .mhead span { padding: 0 3px; border-right: 1px solid #ddd; }
  .mbody { display: flex; border-left: 1px solid #ddd; border-bottom: 1px solid #ddd; height: 152px; }
  .mgrid { flex: 1; display: grid; grid-template-columns: 49px 49px 49px; grid-auto-rows: 63px; gap: 1px 3px; padding-left: 3px; overflow: hidden; align-content: start; }
  .mgrid button { flex-direction: column; border: 1px solid #e6e6e9; }
  .mgrid svg { width: 38px; height: 38px; }
  .mgrid span { width: 46px; white-space: normal; margin-top: 1px; line-height: 11px; text-align: center; }
  .mgrid .hot { background: #d6ebf0; }
  .mgrid .hot svg { background: #fff; }
  .mscroll { width: 11px; background: #f7f6f8; display: flex; flex-direction: column; align-items: center; gap: 4px; padding-top: 3px; }
  .mscroll .thumb { width: 9px; height: 100px; }
  .upc { border-top: 0; border-bottom: 3px solid #333; }
  .tip { position: absolute; left: 136px; top: 151px; z-index: 5; width: 276px; height: 77px; box-sizing: border-box; display: flex; gap: 2px; background: #fff; border: 1px solid #c9c9cc; box-shadow: 1px 1px 1px #8a8a8d; padding: 4px 4px; }
  .tip svg { width: 68px; height: 68px; flex: none; }
  .tip b { display: block; color: #222; margin: 0 0 3px; }
  .tip p { line-height: 11px; }
  .preview { margin: 2px 7px 0 4px; padding: 0 5px; border-bottom: 1px solid #dcdcde; line-height: 14px; }

  .work { display: flex; flex-direction: column; min-width: 0; }
  .docs { display: flex; height: 15px; border-bottom: 1px solid #1c7497; }
  .docs button { padding: 0 4px; gap: 2px; margin-right: 6px; height: 15px; }
  .docs button:nth-child(3) { margin-right: 2px; }
  .docs .icon { width: 8px; height: 8px; }
  .docs .active { background: #005d86; color: #e9f4f9; padding: 0 2px 0 3px; margin-right: 0; }
  .docs .x { font-size: 9px; }
  .model { flex: 1; width: 100%; min-height: 0; display: block; }

  .tray { border-left: 1px solid #d9d9dc; padding-top: 5px; display: flex; flex-direction: column; align-items: center; }
  .tray button { width: 18px; height: 17px; justify-content: center; }
  .tray .icon { width: 13px; height: 13px; }
  .left { margin: auto 0 3px; border: 2px solid transparent; border-right: 3px solid #333; border-left: 0; }
</style>
